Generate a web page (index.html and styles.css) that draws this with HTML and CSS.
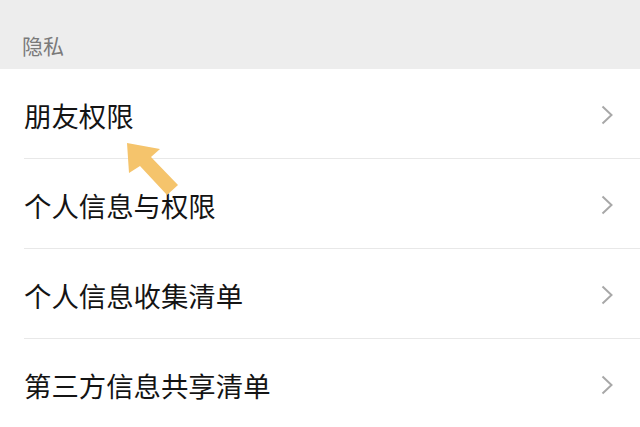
FILE: index.html
```html
<!DOCTYPE html>
<html lang="zh-CN">
<head>
<meta charset="utf-8">
<title>隐私</title>
<link rel="stylesheet" href="styles.css">
</head>
<body>
<div class="page">
  <div class="section-title">隐私</div>
  <ul class="list">
    <li class="row"><div class="row-inner"><span class="label">朋友权限</span><svg class="chev" width="12" height="20" viewBox="0 0 12 20"><polyline points="1.5,1.5 10.5,10 1.5,18.5" fill="none" stroke="#a8a8a8" stroke-width="2"/></svg></div></li>
    <li class="row"><div class="row-inner"><span class="label">个人信息与权限</span><svg class="chev" width="12" height="20" viewBox="0 0 12 20"><polyline points="1.5,1.5 10.5,10 1.5,18.5" fill="none" stroke="#a8a8a8" stroke-width="2"/></svg></div></li>
    <li class="row"><div class="row-inner"><span class="label">个人信息收集清单</span><svg class="chev" width="12" height="20" viewBox="0 0 12 20"><polyline points="1.5,1.5 10.5,10 1.5,18.5" fill="none" stroke="#a8a8a8" stroke-width="2"/></svg></div></li>
    <li class="row"><div class="row-inner"><span class="label">第三方信息共享清单</span><svg class="chev" width="12" height="20" viewBox="0 0 12 20"><polyline points="1.5,1.5 10.5,10 1.5,18.5" fill="none" stroke="#a8a8a8" stroke-width="2"/></svg></div></li>
  </ul>
  <svg class="pointer" width="640" height="427" viewBox="0 0 640 427">
    <polygon points="127,143 160,149 151,157 178,185 167,195 140,166 129,173" fill="#f5c46c"/>
  </svg>
</div>
</body>
</html>
```
FILE: styles.css
```css
* { box-sizing: border-box; }
html, body {
  margin: 0;
  padding: 0;
  background: #ffffff;
}
body {
  font-family: "Noto Sans CJK SC", "Noto Sans", sans-serif;
  width: 640px;
  height: 427px;
  overflow: hidden;
}
.page {
  position: relative;
  width: 640px;
  height: 427px;
}
.section-title {
  height: 69px;
  background: #ededed;
  color: #7a7a7a;
  font-size: 21px;
  line-height: 1;
  padding-left: 22px;
  padding-top: 35px;
}
.list {
  list-style: none;
  margin: 0;
  padding: 0;
}
.row {
  padding-left: 24px;
}
.row-inner {
  height: 90px;
  display: flex;
  align-items: center;
  justify-content: space-between;
  padding-right: 27px;
  border-bottom: 1px solid #e8e8e8;
}
.label {
  font-size: 27.4px;
  color: #141414;
  line-height: 1;
  padding-top: 4px;
}
.chev {
  display: block;
  margin-top: 2px;
}
.pointer {
  position: absolute;
  left: 0;
  top: 0;
  pointer-events: none;
}
```
